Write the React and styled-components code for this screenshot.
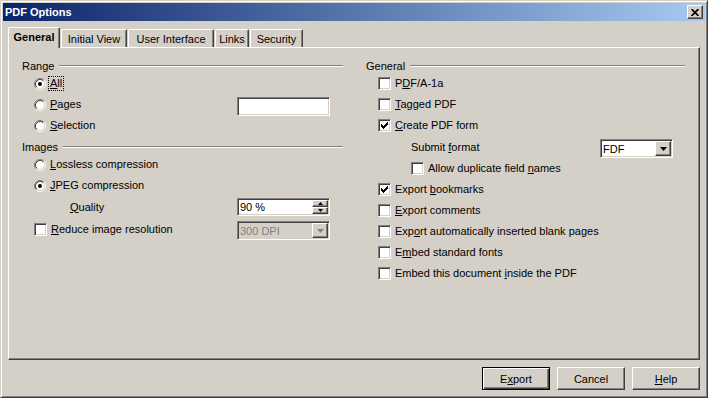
import React from "react";
import styled, { createGlobalStyle } from "styled-components";

const GlobalStyle = createGlobalStyle`
  html, body {
    margin: 0;
    padding: 0;
    background: #d4d0c8;
  }
  body {
    font-family: "Liberation Sans", Arial, sans-serif;
    font-size: 11px;
    color: #000;
  }
`;

const Dialog = styled.div`
  box-sizing: border-box;
  width: 708px;
  height: 398px;
  padding: 2px;
  display: flex;
  flex-direction: column;
  background: #d4d0c8;
  border: 1px solid;
  border-color: #d4d0c8 #404040 #404040 #d4d0c8;
  box-shadow: inset 1px 1px #fff, inset -1px -1px #808080;
`;

const TitleBar = styled.div`
  height: 18px;
  flex: none;
  display: flex;
  align-items: center;
  padding-left: 2px;
  background: linear-gradient(to right, #0a246a, #a6caf0);
`;

const TitleText = styled.span`
  color: #fff;
  font-weight: bold;
  font-size: 11px;
`;

const CloseButton = styled.div`
  box-sizing: border-box;
  margin-left: auto;
  margin-right: 2px;
  width: 16px;
  height: 14px;
  display: flex;
  align-items: center;
  justify-content: center;
  background: #d4d0c8;
  border: 1px solid;
  border-color: #fff #404040 #404040 #fff;
  box-shadow: inset -1px -1px #808080;
`;

const Body = styled.div`
  flex: 1;
  display: flex;
  flex-direction: column;
  padding: 6px 5px 5px;
`;

const TabStrip = styled.div`
  display: flex;
  align-items: flex-end;
  gap: 1px;
  height: 20px;
  flex: none;
`;

const Tab = styled.div`
  box-sizing: border-box;
  position: relative;
  z-index: ${(p) => (p.$active ? 1 : 0)};
  width: ${(p) => p.$width}px;
  height: ${(p) => (p.$active ? 21 : 18)}px;
  margin-bottom: ${(p) => (p.$active ? -1 : 0)}px;
  padding-bottom: ${(p) => (p.$active ? 2 : 0)}px;
  display: flex;
  align-items: center;
  justify-content: center;
  background: #d4d0c8;
  border-top: 1px solid #fff;
  border-left: 1px solid #fff;
  border-right: 1px solid #404040;
  border-radius: 2px 2px 0 0;
  box-shadow: inset -1px 0 #808080;
  font-weight: ${(p) => (p.$active ? "bold" : "normal")};
  white-space: nowrap;
`;

const Panel = styled.div`
  box-sizing: border-box;
  height: 313px;
  flex: none;
  padding: 10px 0 0 13px;
  display: grid;
  grid-template-columns: 321px 319px;
  column-gap: 23px;
  align-content: start;
  border: 1px solid;
  border-color: #fff #404040 #404040 #fff;
  box-shadow: inset -1px -1px #808080;
`;

const Column = styled.div`
  display: flex;
  flex-direction: column;
`;

const Header = styled.div`
  display: flex;
  align-items: center;
  height: 15px;
  margin-top: ${(p) => p.$gap || 0}px;
  &::after {
    content: "";
    flex: 1;
    margin-left: 5px;
    border-top: 1px solid #808080;
    border-bottom: 1px solid #fff;
  }
`;

const Row = styled.div`
  box-sizing: border-box;
  display: flex;
  align-items: center;
  height: ${(p) => p.$h || 21}px;
  padding-left: ${(p) => p.$indent}px;
`;

const Label = styled.span`
  white-space: nowrap;
  line-height: 13px;
  ${(p) =>
    p.$focus &&
    `
    border: 1px dotted #000;
    padding: 0 1px;
    margin-left: -2px;
  `}
`;

const Mn = styled.u`
  text-decoration: underline;
  text-underline-offset: 1px;
`;

const RadioBox = styled.svg`
  flex: none;
  margin-right: 4px;
`;

const CheckBox = styled.span`
  box-sizing: border-box;
  flex: none;
  width: 13px;
  height: 13px;
  margin-right: 4px;
  display: flex;
  align-items: center;
  justify-content: center;
  background: #fff;
  border: 1px solid;
  border-color: #808080 #fff #fff #808080;
  box-shadow: inset 1px 1px #404040, inset -1px -1px #d4d0c8;
`;

const Field = styled.div`
  box-sizing: border-box;
  margin-left: auto;
  margin-right: ${(p) => p.$right}px;
  margin-top: ${(p) => p.$shift || 0}px;
  width: ${(p) => p.$width}px;
  height: ${(p) => p.$height || 19}px;
  padding: 1px;
  display: flex;
  align-items: stretch;
  background: ${(p) => (p.$disabled ? "#d4d0c8" : "#fff")};
  color: ${(p) => (p.$disabled ? "#808080" : "#000")};
  border: 1px solid;
  border-color: #808080 #fff #fff #808080;
  box-shadow: inset 1px 1px #404040, inset -1px -1px #d4d0c8;
`;

const FieldValue = styled.span`
  flex: 1;
  display: flex;
  align-items: center;
  padding-left: 1px;
  white-space: nowrap;
`;

const SmallButton = styled.div`
  box-sizing: border-box;
  width: 16px;
  flex: ${(p) => (p.$half ? 1 : "none")};
  display: flex;
  align-items: center;
  justify-content: center;
  background: #d4d0c8;
  border: 1px solid;
  border-color: #fff #404040 #404040 #fff;
  box-shadow: inset -1px -1px #808080;
`;

const SpinStack = styled.div`
  display: flex;
  flex-direction: column;
  width: 16px;
`;

const ButtonRow = styled.div`
  display: flex;
  justify-content: flex-end;
  gap: 7px;
  margin-top: 7px;
`;

const PushButton = styled.button`
  box-sizing: border-box;
  width: 68px;
  height: 23px;
  padding: 0;
  font-family: inherit;
  font-size: 11px;
  color: #000;
  background: #d4d0c8;
  border: 1px solid;
  border-color: ${(p) =>
    p.$default ? "#000" : "#fff #404040 #404040 #fff"};
  box-shadow: ${(p) =>
    p.$default
      ? "inset 1px 1px #fff, inset -1px -1px #404040, inset -2px -2px #808080"
      : "inset -1px -1px #808080"};
`;

function Radio({ checked }) {
  return (
    <RadioBox width="12" height="12" viewBox="0 0 12 12">
      <circle cx="6" cy="6" r="4.5" fill="#fff" />
      <path d="M2.11 9.89A5.5 5.5 0 0 1 9.89 2.11" stroke="#808080" fill="none" />
      <path d="M9.89 2.11A5.5 5.5 0 0 1 2.11 9.89" stroke="#fff" fill="none" />
      <path d="M2.82 9.18A4.5 4.5 0 0 1 9.18 2.82" stroke="#404040" fill="none" />
      <path d="M9.18 2.82A4.5 4.5 0 0 1 2.82 9.18" stroke="#d4d0c8" fill="none" />
      {checked && <circle cx="6" cy="6" r="2" fill="#000" />}
    </RadioBox>
  );
}

const CHECK_TOPS = [2, 3, 4, 3, 2, 1, 0];

function Check({ checked }) {
  return (
    <CheckBox>
      {checked && (
        <svg width="7" height="7" viewBox="0 0 7 7" shapeRendering="crispEdges">
          {CHECK_TOPS.map((t, i) => (
            <rect key={i} x={i} y={t} width="1" height="3" fill="#000" />
          ))}
        </svg>
      )}
    </CheckBox>
  );
}

function Arrow({ up, size = 7, color = "#000" }) {
  const h = Math.ceil(size / 2);
  const pts = up
    ? `0,${h} ${size},${h} ${size / 2},0`
    : `0,0 ${size},0 ${size / 2},${h}`;
  return (
    <svg width={size} height={h} viewBox={`0 0 ${size} ${h}`}>
      <polygon points={pts} fill={color} />
    </svg>
  );
}

function Combo({ value, width, right, disabled, shift }) {
  return (
    <Field $width={width} $right={right} $disabled={disabled} $shift={shift}>
      <FieldValue>{value}</FieldValue>
      <SmallButton>
        <Arrow color={disabled ? "#808080" : "#000"} />
      </SmallButton>
    </Field>
  );
}

function Spin({ value }) {
  return (
    <Field $width={93} $right={13} $height={18}>
      <FieldValue>{value}</FieldValue>
      <SpinStack>
        <SmallButton $half>
          <Arrow up size={5} />
        </SmallButton>
        <SmallButton $half>
          <Arrow size={5} />
        </SmallButton>
      </SpinStack>
    </Field>
  );
}

const tabs = [
  { name: "General", width: 52, active: true },
  { name: "Initial View", width: 66 },
  { name: "User Interface", width: 86 },
  { name: "Links", width: 34 },
  { name: "Security", width: 53 },
];

const generalChecks = [
  { label: <>Export <Mn>b</Mn>ookmarks</>, checked: true },
  { label: <><Mn>E</Mn>xport comments</> },
  { label: <>Exp<Mn>o</Mn>rt automatically inserted blank pages</> },
  { label: <>E<Mn>m</Mn>bed standard fonts</> },
  { label: <>Embed this document <Mn>i</Mn>nside the PDF</> },
];

export default function App() {
  return (
    <>
      <GlobalStyle />
      <Dialog>
        <TitleBar>
          <TitleText>PDF Options</TitleText>
          <CloseButton>
            <svg width="8" height="7" viewBox="0 0 8 7">
              <path d="M0.5 0 L7.5 7 M7.5 0 L0.5 7" stroke="#000" strokeWidth="1.7" />
            </svg>
          </CloseButton>
        </TitleBar>
        <Body>
          <TabStrip>
            {tabs.map((t) => (
              <Tab key={t.name} $width={t.width} $active={t.active}>
                {t.name}
              </Tab>
            ))}
          </TabStrip>
          <Panel>
            <Column>
              <Header>Range</Header>
              <Row $indent={12}>
                <Radio checked />
                <Label $focus><Mn>A</Mn>ll</Label>
              </Row>
              <Row $indent={12}>
                <Radio />
                <Label><Mn>P</Mn>ages</Label>
                <Field $width={93} $right={13} $shift={3}>
                  <FieldValue />
                </Field>
              </Row>
              <Row $indent={12}>
                <Radio />
                <Label><Mn>S</Mn>election</Label>
              </Row>
              <Header $gap={3}>Images</Header>
              <Row $indent={12}>
                <Radio />
                <Label><Mn>L</Mn>ossless compression</Label>
              </Row>
              <Row $indent={12}>
                <Radio checked />
                <Label><Mn>J</Mn>PEG compression</Label>
              </Row>
              <Row $indent={48} $h={22}>
                <Label><Mn>Q</Mn>uality</Label>
                <Spin value="90 %" />
              </Row>
              <Row $indent={12} $h={22}>
                <Check />
                <Label><Mn>R</Mn>educe image resolution</Label>
                <Combo value="300 DPI" width={93} right={13} disabled shift={3} />
              </Row>
            </Column>
            <Column>
              <Header>General</Header>
              <Row $indent={12}>
                <Check />
                <Label>P<Mn>D</Mn>F/A-1a</Label>
              </Row>
              <Row $indent={12}>
                <Check />
                <Label><Mn>T</Mn>agged PDF</Label>
              </Row>
              <Row $indent={12}>
                <Check checked />
                <Label><Mn>C</Mn>reate PDF form</Label>
              </Row>
              <Row $indent={45} $h={22}>
                <Label>Submit <Mn>f</Mn>ormat</Label>
                <Combo value="FDF" width={73} right={12} shift={3} />
              </Row>
              <Row $indent={45}>
                <Check />
                <Label>Allow duplicate field <Mn>n</Mn>ames</Label>
              </Row>
              {generalChecks.map((c, i) => (
                <Row key={i} $indent={12}>
                  <Check checked={c.checked} />
                  <Label>{c.label}</Label>
                </Row>
              ))}
            </Column>
          </Panel>
          <ButtonRow>
            <PushButton $default>E<Mn>x</Mn>port</PushButton>
            <PushButton>Cancel</PushButton>
            <PushButton><Mn>H</Mn>elp</PushButton>
          </ButtonRow>
        </Body>
      </Dialog>
    </>
  );
}
